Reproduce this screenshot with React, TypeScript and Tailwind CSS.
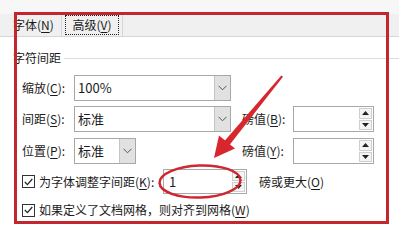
import React from 'react'

const Key = ({ k }: { k: string }) => (
  <>
    (<span className="underline underline-offset-2">{k}</span>)
  </>
)

function Chevron() {
  return (
    <svg width="9" height="6" viewBox="0 0 9 6">
      <path d="M0.5 0.8 L4.5 4.8 L8.5 0.8" fill="none" stroke="#555" strokeWidth="1" />
    </svg>
  )
}

function Combo({ value, w }: { value: string; w: string }) {
  return (
    <div className={`flex h-[26px] ${w} border border-[#a8a8a8] bg-white`}>
      <div className="flex flex-1 items-center pl-[3px] text-[13px]">{value}</div>
      <div className="flex w-[16px] items-center justify-center border-l border-[#c4c4c4] bg-[#e1e1e1]">
        <Chevron />
      </div>
    </div>
  )
}

function SpinBtns({ w }: { w: string }) {
  return (
    <div className={`flex ${w} flex-col gap-[1px] py-[1px] pr-[1px]`}>
      <div className="flex flex-1 items-center justify-center border border-[#cfcfcf] bg-[#f4f4f4]">
        <svg width="7" height="4" viewBox="0 0 7 4"><path d="M0 4 L3.5 0 L7 4 Z" fill="#222" /></svg>
      </div>
      <div className="flex flex-1 items-center justify-center border border-[#cfcfcf] bg-[#f4f4f4]">
        <svg width="7" height="4" viewBox="0 0 7 4"><path d="M0 0 L3.5 4 L7 0 Z" fill="#222" /></svg>
      </div>
    </div>
  )
}

function Spinner({ value, w, h }: { value?: string; w: string; h: string }) {
  return (
    <div className={`flex ${h} ${w} border border-[#a8a8a8] bg-white`}>
      <div className="flex flex-1 items-center pl-[5px] text-[13px]">{value}</div>
      <SpinBtns w="w-[14px]" />
    </div>
  )
}

function Check() {
  return (
    <div className="flex h-[13px] w-[13px] items-center justify-center border border-[#333] bg-white">
      <svg width="9" height="8" viewBox="0 0 9 8">
        <path d="M0.8 4 L3.4 6.6 L8.3 1" fill="none" stroke="#222" strokeWidth="1.2" />
      </svg>
    </div>
  )
}

export default function App() {
  return (
    <div className="relative h-[226px] w-[399px] overflow-hidden bg-[#f7f7f7] text-[12px] leading-4 text-[#1b1b1b] font-['Noto_Sans_CJK_SC','Microsoft_YaHei',sans-serif]">
      <div className="pt-[14px]">
        {/* 标签页 */}
        <div className="flex h-[23px] border-b border-[#d6d6d6] bg-[#f0f0f0]">
          <div className="flex w-[62px] items-center border-r border-[#d6d6d6] pl-[13px]">
            字体<Key k="N" />
          </div>
          <div className="flex w-[61px] items-center justify-center border-r border-[#d6d6d6]">
            <span className="flex h-[20px] items-center border border-dotted border-[#222] px-[6px]">
              高级<Key k="V" />
            </span>
          </div>
        </div>

        {/* 内容 */}
        <div className="h-[190px] bg-white pt-[13px]">
          <div className="flex h-4 items-center pl-[13px]">
            <span>字符间距</span>
            <div className="ml-[3px] flex-1 border-t border-[#dcdcdc]" />
          </div>

          <div className="mt-[9px] flex items-center pl-[22px]">
            <div className="w-[52px]">缩放<Key k="C" />:</div>
            <Combo value="100%" w="w-[157px]" />
          </div>

          <div className="mt-[5px] flex items-center pl-[22px]">
            <div className="w-[52px]">间距<Key k="S" />:</div>
            <Combo value="标准" w="w-[157px]" />
            <div className="ml-[11px] w-[51px]">磅值<Key k="B" />:</div>
            <Spinner w="w-[81px]" h="h-[26px]" />
          </div>

          <div className="mt-[6px] flex items-center pl-[22px]">
            <div className="w-[52px]">位置<Key k="P" />:</div>
            <div className="w-[157px]">
              <Combo value="标准" w="w-[62px]" />
            </div>
            <div className="ml-[11px] w-[51px]">磅值<Key k="Y" />:</div>
            <Spinner w="w-[81px]" h="h-[26px]" />
          </div>

          <div className="mt-[5px] flex items-center pl-[22px]">
            <Check />
            <div className="ml-[4px] w-[124px]">为字体调整字间距<Key k="K" />:</div>
            <Spinner value="1" w="w-[84px]" h="h-[25px]" />
            <div className="ml-[12px]">磅或更大<Key k="O" /></div>
          </div>

          <div className="mt-[8px] flex items-center pl-[22px]">
            <Check />
            <div className="ml-[4px]">如果定义了文档网格，则对齐到网格<Key k="W" /></div>
          </div>
        </div>
      </div>

      {/* 标注 */}
      <div className="absolute left-[14px] top-[12px] h-[212px] w-[375px] border-[3px] border-[#c3262d]" />
      <svg className="absolute left-0 top-0" width="399" height="226" viewBox="0 0 399 226">
        <polygon points="281.3,75.4 283,76.8 229.5,145 224.5,141" fill="#d7262e" />
        <polygon points="214,158 219,135.5 235,148.5" fill="#d7262e" />
        <ellipse cx="200" cy="181.5" rx="40.5" ry="16" fill="none" stroke="#cf2730" strokeWidth="2.5" transform="rotate(-2 200 181.5)" />
      </svg>
    </div>
  )
}
